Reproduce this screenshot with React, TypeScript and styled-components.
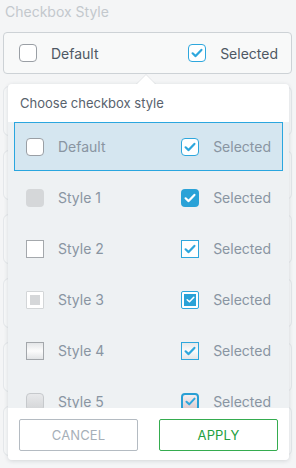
import React from "react";
import styled, { createGlobalStyle, css } from "styled-components";

const Global = createGlobalStyle`
  html, body { margin: 0; padding: 0; background: #f4f5f6; }
  body { font-family: Inter, "Noto Sans", sans-serif; -webkit-font-smoothing: antialiased; }
  * { box-sizing: border-box; }
`;

const Page = styled.div`
  position: relative;
  width: 296px;
  height: 468px;
  overflow: hidden;
  padding: 0 4px 0 3px;
`;

const FieldLabel = styled.div`
  height: 24px;
  line-height: 24px;
  padding-left: 2px;
  font-size: 14px;
  color: #c3c8cd;
`;

const SelectBox = styled.div`
  margin-top: 8px;
  height: 42px;
  border: 1px solid #cdd2d6;
  border-radius: 4px;
  background: #f8f9f9;
  display: flex;
  align-items: center;
  justify-content: space-between;
  padding: 0 13px 0 15px;
`;

const Option = styled.div`
  display: flex;
  align-items: center;
  gap: 14px;
`;

const OptionText = styled.span<{ $tone?: "dark" | "muted" }>`
  font-size: 14px;
  color: ${(p) => (p.$tone === "muted" ? "#8995a2" : "#4e5864")};
`;

const Backdrop = styled.div`
  margin-top: 12px;
  display: flex;
  flex-direction: column;
  gap: 14px;
`;

const GhostCard = styled.div`
  height: 50px;
  border: 1px solid #e4e7ea;
  border-radius: 6px;
  background: #f7f8f9;
`;

type Variant = "default" | "s1" | "s2" | "s3" | "s4" | "s5";

const boxStyles: Record<Variant, { off: ReturnType<typeof css>; on: ReturnType<typeof css> }> = {
  default: {
    off: css`border: 1.5px solid #9a9fa5; border-radius: 4px; background: #fff;`,
    on: css`border: 1.5px solid #2ea7dd; border-radius: 4px; background: #fff;`,
  },
  s1: {
    off: css`border: none; border-radius: 4px; background: #d5d7d9;`,
    on: css`border: none; border-radius: 4px; background: #2aa2d7;`,
  },
  s2: {
    off: css`border: 1px solid #a4a8ac; border-radius: 0; background: #fff;`,
    on: css`border: 1px solid #2ea7dd; border-radius: 0; background: #fff;`,
  },
  s3: {
    off: css`border: 1px solid #d3d6d8; border-radius: 1px; background: #fff; padding: 3px;`,
    on: css`border: 1.5px solid #2ea7dd; border-radius: 2px; background: #fff; padding: 2px;`,
  },
  s4: {
    off: css`border: 1px solid #a3a7ab; border-radius: 0; background: linear-gradient(#e4e6e8, #fcfcfc 50%, #e2e4e6);`,
    on: css`border: 1px solid #2ea7dd; border-radius: 0; background: linear-gradient(#e6e8ea, #fbfbfb 50%, #e4e6e8);`,
  },
  s5: {
    off: css`border: 1px solid #c6c9cc; border-radius: 4px; background: linear-gradient(#e8e9eb, #d3d5d7);`,
    on: css`border: 2px solid #2a9fd4; border-radius: 4px; background: linear-gradient(#f4eef0, #dccbcf);`,
  },
};

const Box = styled.span<{ $variant: Variant; $checked: boolean }>`
  width: 18px;
  height: 18px;
  flex: none;
  display: inline-flex;
  align-items: center;
  justify-content: center;
  ${(p) => (p.$checked ? boxStyles[p.$variant].on : boxStyles[p.$variant].off)}
`;

const Inner = styled.span<{ $checked: boolean }>`
  width: 100%;
  height: 100%;
  display: flex;
  align-items: center;
  justify-content: center;
  background: ${(p) => (p.$checked ? "#2aa2d7" : "#d5d7d9")};
`;

const Check = ({ color, size = 12, width = 2.2 }: { color: string; size?: number; width?: number }) => (
  <svg width={size} height={size} viewBox="0 0 12 12" fill="none">
    <path d="M1.6 6.3 L4.6 9.1 L10.4 2.9" stroke={color} strokeWidth={width} strokeLinecap="round" strokeLinejoin="round" />
  </svg>
);

const Checkbox = ({ variant, checked }: { variant: Variant; checked: boolean }) => {
  if (variant === "s3") {
    return (
      <Box $variant={variant} $checked={checked}>
        <Inner $checked={checked}>{checked && <Check color="#fff" size={9} width={2} />}</Inner>
      </Box>
    );
  }
  const white = variant === "s1";
  return (
    <Box $variant={variant} $checked={checked}>
      {checked && <Check color={white ? "#fff" : "#2ea7dd"} size={variant === "s5" ? 11 : 12} />}
    </Box>
  );
};

const Popover = styled.div`
  position: absolute;
  top: 84px;
  left: 8px;
  width: 281px;
  height: 376px;
  background: #eef1f3;
  border-radius: 4px;
  box-shadow: 0 1px 4px rgba(40, 50, 60, 0.16);
  display: flex;
  flex-direction: column;
`;

const Arrow = styled.div`
  position: absolute;
  top: -9px;
  left: 128px;
  width: 0;
  height: 0;
  border-left: 10px solid transparent;
  border-right: 10px solid transparent;
  border-bottom: 10px solid #ffffff;
  filter: drop-shadow(0 -1px 0 rgba(40, 50, 60, 0.08));
`;

const Header = styled.div`
  height: 38px;
  flex: none;
  background: #fff;
  border-radius: 4px 4px 0 0;
  display: flex;
  align-items: center;
  padding: 0 12px;
  font-size: 13px;
  color: #58626d;
`;

const List = styled.div`
  flex: 1;
  overflow: hidden;
  padding: 0 6px;
  display: flex;
  flex-direction: column;
  gap: 2px;
`;

const Row = styled.div<{ $active?: boolean }>`
  height: 49px;
  flex: none;
  display: flex;
  align-items: center;
  justify-content: space-between;
  padding: 0 11px 0 11px;
  border: 1px solid ${(p) => (p.$active ? "#2aa6df" : "transparent")};
  background: ${(p) => (p.$active ? "#d5e6f0" : "transparent")};
`;

const Footer = styled.div`
  height: 52px;
  flex: none;
  background: #fff;
  border-radius: 0 0 4px 4px;
  display: flex;
  align-items: flex-start;
  justify-content: space-between;
  padding: 11px 11px 0 11px;
`;

const Button = styled.button<{ $kind: "cancel" | "apply" }>`
  width: 119px;
  height: 32px;
  border-radius: 2px;
  background: #fff;
  font-family: inherit;
  font-size: 13px;
  text-transform: uppercase;
  letter-spacing: 0.1px;
  cursor: pointer;
  border: 1px solid ${(p) => (p.$kind === "apply" ? "#35ac4f" : "#b4bbc2")};
  color: ${(p) => (p.$kind === "apply" ? "#24a03f" : "#a6afb8")};
`;

const rows: { label: string; variant: Variant }[] = [
  { label: "Default", variant: "default" },
  { label: "Style 1", variant: "s1" },
  { label: "Style 2", variant: "s2" },
  { label: "Style 3", variant: "s3" },
  { label: "Style 4", variant: "s4" },
  { label: "Style 5", variant: "s5" },
];

export default function App() {
  return (
    <>
      <Global />
      <Page>
        <FieldLabel>Checkbox Style</FieldLabel>
        <SelectBox>
          <Option>
            <Checkbox variant="default" checked={false} />
            <OptionText>Default</OptionText>
          </Option>
          <Option>
            <Checkbox variant="default" checked />
            <OptionText>Selected</OptionText>
          </Option>
        </SelectBox>
        <Backdrop>
          {Array.from({ length: 7 }).map((_, i) => (
            <GhostCard key={i} />
          ))}
        </Backdrop>
        <Popover>
          <Arrow />
          <Header>Choose checkbox style</Header>
          <List>
            {rows.map((r, i) => (
              <Row key={r.label} $active={i === 0}>
                <Option>
                  <Checkbox variant={r.variant} checked={false} />
                  <OptionText $tone="muted">{r.label}</OptionText>
                </Option>
                <Option>
                  <Checkbox variant={r.variant} checked />
                  <OptionText $tone="muted">Selected</OptionText>
                </Option>
              </Row>
            ))}
          </List>
          <Footer>
            <Button $kind="cancel">Cancel</Button>
            <Button $kind="apply">Apply</Button>
          </Footer>
        </Popover>
      </Page>
    </>
  );
}
